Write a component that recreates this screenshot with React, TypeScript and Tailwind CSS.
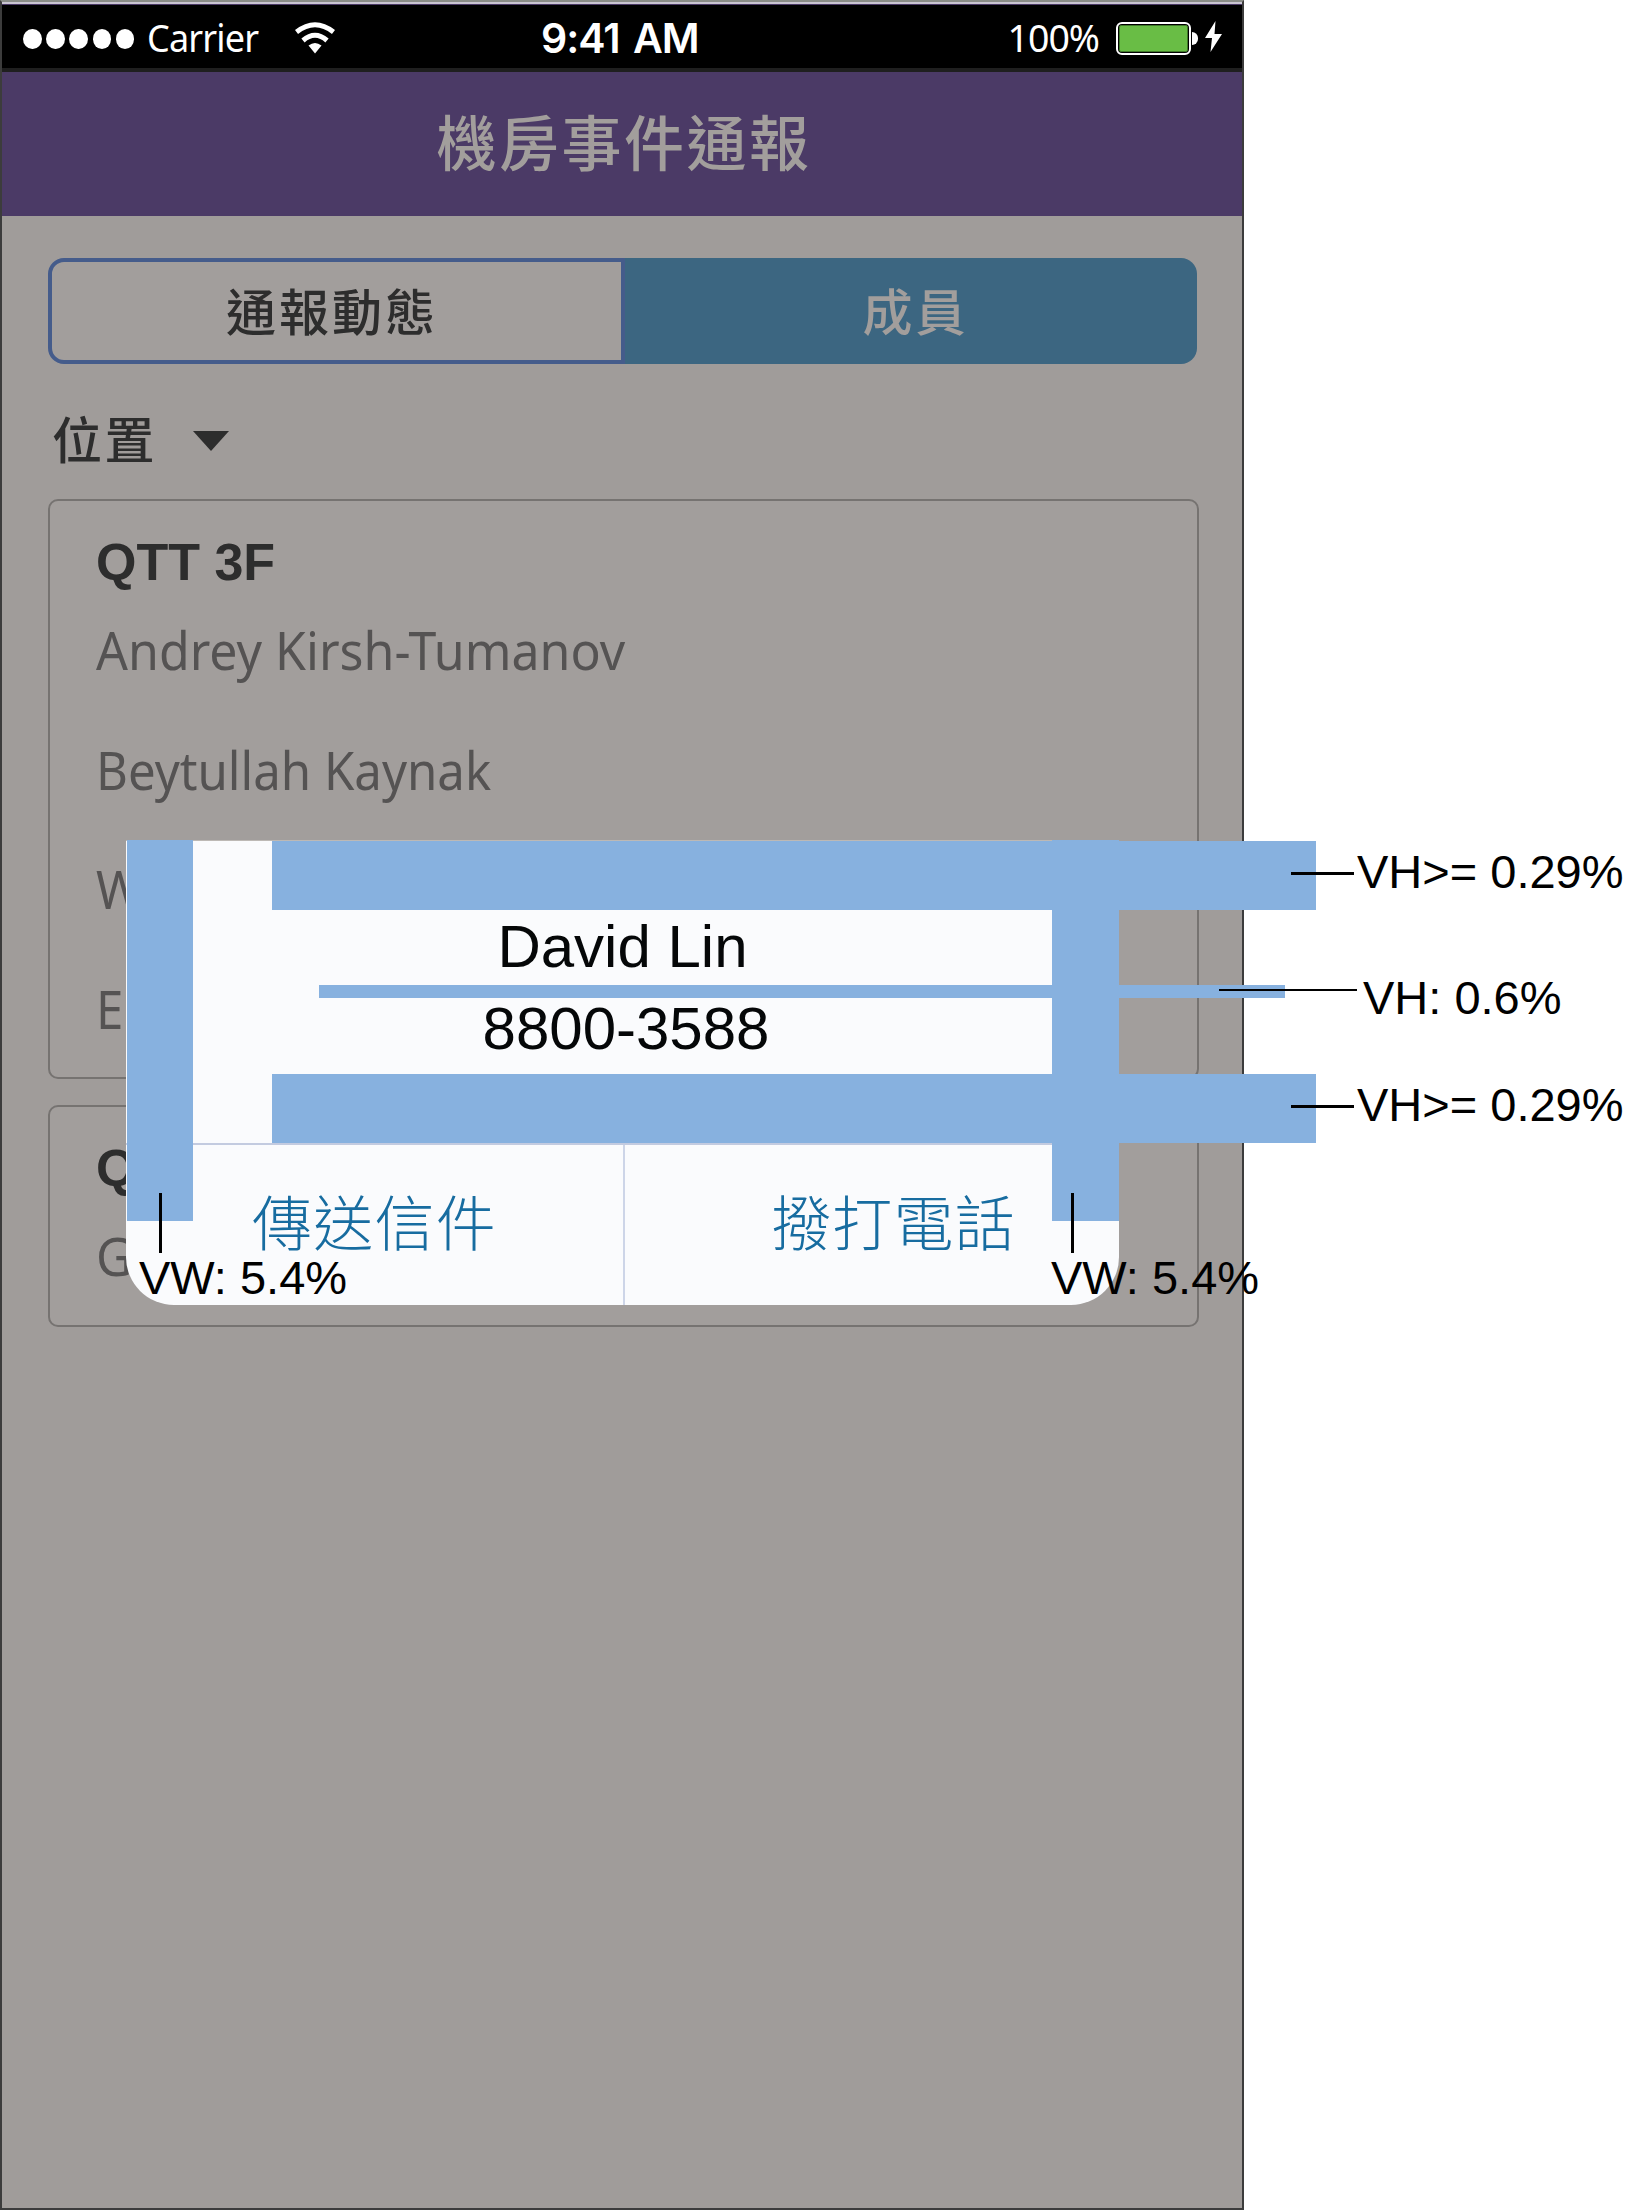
import React from "react";

const CJK = "font-['Noto_Sans_CJK_TC','Noto_Sans',sans-serif]";
const NOTO = "font-['Noto_Sans',sans-serif]";
const ARIAL = "font-['Liberation_Sans',Arial,sans-serif]";

function StatusBar() {
  return (
    <div className="h-[67px] shrink-0 border-b-4 border-[#1f1f1f] bg-black flex items-center text-white pl-[21px] pr-[20px] relative">
      <div className="flex gap-[4.7px] mt-[5px]">
        {[0, 1, 2, 3, 4].map((i) => (
          <span key={i} className="w-[18.5px] h-5 rounded-[50%] bg-white" />
        ))}
      </div>
      <span className={`${NOTO} text-[38.5px] leading-[62px] ml-[13px] mt-px w-[113px] tracking-[-0.9px] whitespace-nowrap origin-left scale-x-[0.935]`}>Carrier</span>
      <svg className="ml-[35px] mt-[2px] shrink-0" width="40" height="32" viewBox="0 0 40 32" fill="none">
        <path d="M1.500 10Q20 -4.500 38.500 10" stroke="#fff" strokeWidth="5" />
        <path d="M8 18.500Q20 8 32 18.500" stroke="#fff" strokeWidth="5" />
        <path d="M13.500 23.500Q20 18.500 26.500 23.500L20 31.500Z" fill="#fff" />
      </svg>
      <span className="absolute left-[539px] top-0 font-['Inter',sans-serif] font-semibold text-[41px] leading-[66px] tracking-[-1px] [word-spacing:4px] whitespace-nowrap">9:41 AM</span>
      <div className="ml-auto flex items-center">
        <span className={`${NOTO} text-[37.5px] leading-[62px] mt-[2px] mr-[17px] tracking-[-1px] whitespace-nowrap`}>100%</span>
        <span className="w-[75px] h-[33px] mt-[3px] rounded-[6px] border-[2.5px] border-white p-px flex">
          <span className="flex-1 bg-[#69bd45] rounded-[2px] border border-[#3f7a28]" />
        </span>
        <span className="w-[6px] h-[13px] mt-[3px] ml-px bg-white rounded-r-full" />
        <svg className="ml-[7px]" width="17" height="31" viewBox="0 0 17 31">
          <path d="M10.500 0L0 17H7L5.500 31L17 13H9.500Z" fill="#fff" />
        </svg>
      </div>
    </div>
  );
}

function Card({ title, names, className }: { title: string; names: string[]; className: string }) {
  return (
    <section className={`mx-[46px] w-[1151px] shrink-0 overflow-hidden rounded-[10px] border-2 border-[#767371] bg-[#a29e9c] pl-[46px] pt-[33px] ${className}`}>
      <h2 className={`${ARIAL} h-[56px] font-bold text-[52px] leading-[57px] text-[#2d2d2d] whitespace-nowrap`}>{title}</h2>
      {names.map((n, i) => (
        <p
          key={n}
          className={`${NOTO} text-[52px] leading-[119.7px] font-normal text-[#555353] whitespace-nowrap origin-left ${i === 0 ? "scale-x-[0.962]" : "scale-x-[0.945]"}`}
        >
          {n}
        </p>
      ))}
    </section>
  );
}

function Dialog() {
  return (
    <div className="absolute left-[126px] top-[840px] w-[993px] h-[465px] bg-[#fafbfd] border-t border-[#bdb9b5] rounded-b-[48px] flex flex-col">
      <div className={`${ARIAL} h-[302px] flex flex-col items-center pt-[72px] text-[60px] leading-[66px] text-[#050708]`}>
        <div className="h-[83px] pt-px">David Lin</div>
        <div className="pl-[7px]">8800-3588</div>
      </div>
      <div className={`${CJK} flex-1 flex border-t-2 border-[#c3cbe0] text-[60px] leading-[80px] tracking-[1.200px] font-light text-[#176ca0]`}>
        <div className="w-[499px] border-r-2 border-[#cdd5e8] flex justify-center pt-[35px]">傳送信件</div>
        <div className="flex-1 flex justify-center pt-[35px] pl-[43px]">撥打電話</div>
      </div>
    </div>
  );
}

const BARS = [
  "left-[127px] top-[840px] w-[66px] h-[381px]",
  "left-[1052px] top-[840px] w-[67px] h-[381px]",
  "left-[272px] top-[841px] w-[1043.500px] h-[69px]",
  "left-[319px] top-[985px] w-[965.500px] h-[12.500px]",
  "left-[272px] top-[1074px] w-[1043.500px] h-[69px]",
];

const LEADERS = [
  "left-[159px] top-[1193px] w-[3px] h-[60px]",
  "left-[1071px] top-[1193px] w-[3px] h-[60px]",
  "left-[1291px] top-[872px] w-[63px] h-[3px]",
  "left-[1219px] top-[989px] w-[138px] h-[2px]",
  "left-[1291px] top-[1105px] w-[63px] h-[3px]",
];

const LABELS = [
  { text: "VW: 5.4%", at: "left-[139px] top-[1248px]" },
  { text: "VW: 5.4%", at: "left-[1051px] top-[1248px]" },
  { text: "VH>= 0.29%", at: "left-[1357px] top-[842px]" },
  { text: "VH: 0.6%", at: "left-[1363px] top-[968px]" },
  { text: "VH>= 0.29%", at: "left-[1357px] top-[1075px]" },
];

export default function App() {
  return (
    <div className="relative w-[1625px] h-[2211px] overflow-hidden bg-white">
      <div className="w-[1244px] h-[2210px] border-2 border-[#3c3c3c] border-t-[#8a8d88] bg-[#a09c9a] flex flex-col">
        <div className="h-[3px] shrink-0 bg-[#c9c5d2] border-b border-[#4b3a66]" />
        <StatusBar />
        <header className={`${CJK} h-[144px] shrink-0 bg-[#4b3a66] flex items-center justify-center pb-[9px] pl-[4px] text-[60px] leading-none tracking-[2.500px] font-medium text-[#a29e9c]`}>
          機房事件通報
        </header>
        <div className={`${CJK} mt-[42px] mx-[46px] w-[1149px] h-[106px] shrink-0 flex text-[50px] leading-none tracking-[3px] font-medium`}>
          <div className="w-[577px] border-4 border-[#455c8b] rounded-l-[16px] bg-[#a29e9c] text-[#2d2d2d] flex items-center justify-center pb-[5px] pr-[9px]">
            通報動態
          </div>
          <div className="flex-1 bg-[#3c6681] rounded-r-[16px] text-[#a29e9c] flex items-center justify-center pb-[5px] pl-[9px]">
            成員
          </div>
        </div>
        <div className={`${CJK} h-[135px] shrink-0 flex items-center pt-[11px] pl-[50px] text-[50px] leading-none tracking-[2.500px] font-medium text-[#2d2d2d]`}>
          位置
          <svg className="ml-[36px] mt-[8px]" width="36" height="20" viewBox="0 0 36 20">
            <path d="M0 0H36L18 20Z" fill="#2d2d2d" />
          </svg>
        </div>
        <Card title="QTT 3F" names={["Andrey Kirsh-Tumanov", "Beytullah Kaynak", "W", "E"]} className="h-[580px]" />
        <Card title="Q" names={["G"]} className="h-[222px] mt-[26px]" />
      </div>

      <Dialog />

      {BARS.map((b) => (
        <div key={b} className={`absolute bg-[#87b1df] ${b}`} />
      ))}
      {LEADERS.map((l) => (
        <div key={l} className={`absolute bg-black ${l}`} />
      ))}
      {LABELS.map((l) => (
        <div key={l.at} className={`absolute ${ARIAL} text-[47px] leading-[60px] text-black whitespace-nowrap ${l.at}`}>
          {l.text}
        </div>
      ))}
    </div>
  );
}
